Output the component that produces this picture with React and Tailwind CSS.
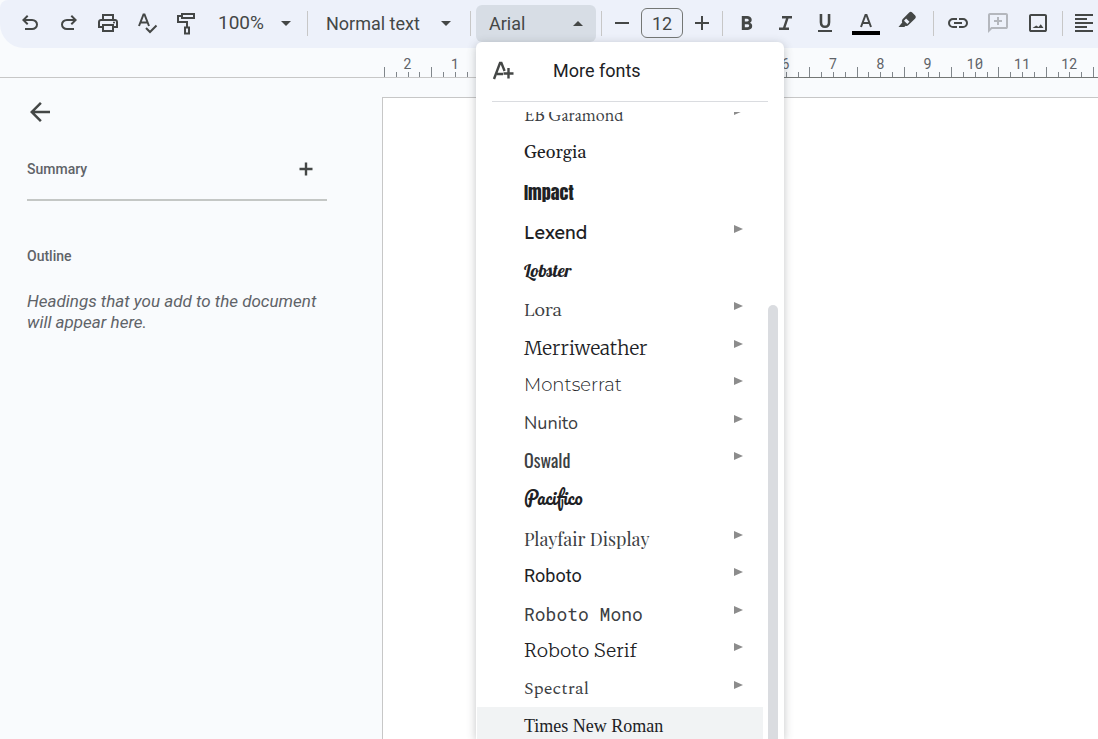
import clsx from 'clsx'

// Filled glyphs, all on the 960 grid
const ICONS = {
  undo: 'M280-200v-80h284q63 0 109.5-40T720-420q0-60-46.5-100T564-560H312l104 104-56 56-200-200 200-200 56 56-104 104h252q97 0 166.5 63T800-420q0 94-69.5 157T564-200H280Z',
  redo: 'M396-200q-97 0-166.5-63T160-420q0-94 69.5-157T396-640h252L544-744l56-56 200 200-200 200-56-56 104-104H396q-63 0-109.5 40T240-420q0 60 46.5 100T396-280h284v80H396Z',
  print: 'M640-640v-120H320v120h-80v-200h480v200h-80Zm80 180q17 0 28.5-11.5T760-500q0-17-11.5-28.5T720-540q-17 0-28.5 11.5T680-500q0 17 11.5 28.5T720-460Zm-80 260v-160H320v160h320Zm80 80H240v-160H80v-240q0-51 35-85.5t85-34.5h560q51 0 85 34.5t35 85.5v240H720v160Zm80-240v-160q0-17-11.5-28.5T760-560H200q-17 0-28.5 11.5T160-520v160h80v-80h480v80h80Z',
  back: 'm313-440 224 224-57 56-320-320 320-320 57 56-224 224h487v80H313Z',
  add: 'M440-440H200v-80h240v-240h80v240h240v80H520v240h-80v-240Z',
  remove: 'M200-440v-80h560v80H200Z',
  bold: 'M272-200v-560h221q65 0 120 40t55 111q0 51-23 78.5T602-491q25 11 55.5 41t30.5 90q0 89-65 124.5T501-200H272Zm121-112h104q48 0 58.5-24.5T566-372q0-11-10.5-35.5T494-432H393v120Zm0-228h93q33 0 48-17t15-38q0-24-17-39t-44-15h-95v109Z',
  italic: 'M200-200v-100h160l120-360H320v-100h400v100H580L460-300h140v100H200Z',
  underline: 'M200-120v-80h560v80H200Zm280-160q-101 0-157-63t-56-167v-330h103v336q0 56 28 91t82 35q54 0 82-35t28-91v-336h103v330q0 104-56 167t-157 63Z',
  link: 'M440-280H280q-83 0-141.5-58.5T80-480q0-83 58.5-141.5T280-680h160v80H280q-50 0-85 35t-35 85q0 50 35 85t85 35h160v80ZM320-440v-80h320v80H320Zm200 160v-80h160q50 0 85-35t35-85q0-50-35-85t-85-35H520v-80h160q83 0 141.5 58.5T880-480q0 83-58.5 141.5T680-280H520Z',
  comment: 'M440-400h80v-120h120v-80H520v-120h-80v120H320v80h120v120ZM80-80v-720q0-33 23.5-56.5T160-880h640q33 0 56.5 23.5T880-800v480q0 33-23.5 56.5T800-240H240L80-80Zm126-240h594v-480H160v525l46-45Z',
  image: 'M200-120q-33 0-56.5-23.5T120-200v-560q0-33 23.5-56.5T200-840h560q33 0 56.5 23.5T840-760v560q0 33-23.5 56.5T760-120H200Zm0-80h560v-560H200v560Zm60-80h440L590-430l-90 110-90-60-150 100Z',
  align: 'M120-120v-80h720v80H120Zm0-160v-80h480v80H120Zm0-160v-80h720v80H120Zm0-160v-80h480v80H120Zm0-160v-80h720v80H120Z',
}

const FONTS = [
  { name: 'EB Garamond', more: true, row: 'h-[38px]', face: "text-[18px] text-[#3c4043] font-['EB_Garamond','Liberation_Serif',serif]" },
  { name: 'Georgia', row: 'h-10', face: "text-[18px] font-['Gelasio','Georgia','Liberation_Serif',serif]" },
  { name: 'Impact', row: 'h-10', face: "text-[18px] font-['Anton','Impact','Oswald','Liberation_Sans_Narrow',sans-serif]" },
  { name: 'Lexend', more: true, row: 'h-[38px]', face: "text-[18px] font-['Lexend','Noto_Sans',sans-serif]" },
  { name: 'Lobster', row: 'h-[39px]', face: "text-[18px] font-['Lobster','Liberation_Serif',serif]" },
  { name: 'Lora', more: true, row: 'h-[38px]', face: "text-[18px] text-[#3c4043] font-['Lora','Liberation_Serif',serif]" },
  { name: 'Merriweather', more: true, row: 'h-[37px]', face: "text-[19px] font-light font-['Merriweather','DejaVu_Serif_Condensed','DejaVu_Serif',serif]" },
  { name: 'Montserrat', more: true, row: 'h-[38px]', face: "text-[18px] font-light font-['Montserrat','Inter',sans-serif]" },
  { name: 'Nunito', more: true, row: 'h-[37px]', face: "text-[18px] text-[#3c4043] font-['Nunito','Noto_Sans',sans-serif]" },
  { name: 'Oswald', more: true, row: 'h-[38px]', face: "text-[18px] text-[#3c4043] font-['Oswald','Liberation_Sans_Narrow','DejaVu_Sans_Condensed',sans-serif]" },
  { name: 'Pacifico', row: 'h-[41px]', face: "text-[18px] font-['Pacifico','Liberation_Serif',serif]" },
  { name: 'Playfair Display', more: true, row: 'h-[37px]', face: "text-[18px] text-[#3c4043] font-['Playfair_Display','Liberation_Serif',serif]" },
  { name: 'Roboto', more: true, row: 'h-[38px]', face: "text-[18px] font-['Roboto',sans-serif]" },
  { name: 'Roboto Mono', more: true, row: 'h-[37px]', face: "text-[18px] text-[#3c4043] font-['Roboto_Mono','Liberation_Mono',monospace]" },
  { name: 'Roboto Serif', more: true, row: 'h-[38px]', face: "text-[19px] font-light font-['Roboto_Serif','DejaVu_Serif',serif]" },
  { name: 'Spectral', more: true, row: 'h-[37px]', face: "text-[18px] text-[#3c4043] font-['Spectral','Liberation_Serif',serif]" },
  { name: 'Times New Roman', active: true, row: 'h-10', face: "text-[18px] font-['Times_New_Roman','Liberation_Serif',serif]" },
]

// The cells under the open menu carry no number
const RULER = ['2', '1', '', '', '', '', '', '', '6', '7', '8', '9', '10', '11', '12']

function Glyph({ name, className = 'size-6' }) {
  return (
    <svg viewBox="0 -960 960 960" fill="currentColor" className={clsx('shrink-0', className)} aria-hidden="true">
      <path d={ICONS[name]} />
    </svg>
  )
}

function Stroke({ children }) {
  return (
    <svg viewBox="0 0 24 24" fill="none" stroke="currentColor" strokeWidth="2" className="size-6 shrink-0" aria-hidden="true">
      {children}
    </svg>
  )
}

function ToolButton({ label, className, children }) {
  return (
    <button type="button" aria-label={label} className={clsx('flex size-6 shrink-0 items-center justify-center', className)}>
      {children}
    </button>
  )
}

function Caret({ up }) {
  return (
    <svg viewBox="0 0 10 5" fill="currentColor" className="pointer-events-none h-[5px] w-[10px] shrink-0" aria-hidden="true">
      <path d={up ? 'M0 5 5 0l5 5Z' : 'M0 0h10L5 5Z'} />
    </svg>
  )
}

function Divider() {
  return <div className="h-[25px] w-px shrink-0 bg-[#c7c7c7]" />
}

// Native select with its own caret, sized by the wrapper
function Picker({ label, value, className }) {
  return (
    <label className={clsx('flex shrink-0 items-center', className)}>
      <select aria-label={label} defaultValue={value} className="min-w-0 flex-1 appearance-none bg-transparent outline-none">
        <option>{value}</option>
      </select>
      <Caret />
    </label>
  )
}

function FontMenu() {
  return (
    <div
      role="menu"
      className="absolute top-full left-0 z-10 flex h-[calc(100vh-42px)] w-[308px] flex-col rounded-t-md bg-white text-[#202124] shadow-[0_2px_10px_rgba(60,64,67,0.3)]"
    >
      <button type="button" role="menuitem" className="mx-4 flex h-[60px] shrink-0 items-center gap-[37px] border-b border-[#dadce0] pb-0.5 text-left text-[18px]">
        <svg viewBox="0 0 24 24" fill="none" stroke="#444746" strokeWidth="2.4" className="size-6 shrink-0" aria-hidden="true">
          <path d="M2 20 8 4h1.4l3.2 8M5 15h6M16.5 9v10.5M11.500 14.500h10" />
        </svg>
        More fonts
      </button>
      <div className="mt-[10px] flex min-h-0 flex-1 overflow-hidden">
        <div className="-mt-4 ml-px flex-1">
          {FONTS.map((font) => (
            <button
              key={font.name}
              type="button"
              role="menuitem"
              className={clsx('flex w-full items-start justify-between pr-5 pl-[47px] text-left', font.row, font.active && 'bg-[#f1f3f4]')}
            >
              <span className={clsx('leading-[38px] whitespace-nowrap', font.face)}>{font.name}</span>
              {font.more && (
                <svg viewBox="0 0 9 8" fill="#8c8c8c" className="mt-[11px] h-2 w-[9px]" aria-hidden="true">
                  <path d="M0 0 9 4 0 8Z" />
                </svg>
              )}
            </button>
          ))}
        </div>
        <div className="mr-[6px] ml-[5px] flex w-[10px] flex-col pt-[193px]">
          <div className="flex-1 rounded-t-full bg-[#dadce0]" />
        </div>
      </div>
    </div>
  )
}

function Toolbar() {
  return (
    <div className="flex h-12 items-center rounded-tl-lg rounded-bl-3xl bg-[#edf1fa] pb-0.5 pl-[18px] text-[18px] text-[#444746]">
      <div className="flex gap-[15px]">
        <ToolButton label="Undo"><Glyph name="undo" /></ToolButton>
        <ToolButton label="Redo"><Glyph name="redo" /></ToolButton>
        <ToolButton label="Print"><Glyph name="print" /></ToolButton>
        <ToolButton label="Spelling">
          <Stroke>
            <path d="M4 15 8.5 3.5h1L14 15M5.5 11.5h7M11 17l4 4 6.5-6.500" />
          </Stroke>
        </ToolButton>
        <ToolButton label="Paint format">
          <Stroke>
            <path d="M8 3h12v4H8ZM8 5H4v6h9v5M11 16.5h4v6h-4Z" />
          </Stroke>
        </ToolButton>
      </div>
      <Picker label="Zoom" value="100%" className="mr-4 ml-5 w-[73px] text-[19px]" />
      <Divider />
      <Picker label="Styles" value="Normal text" className="mr-[19px] ml-[18px] w-[125px]" />
      <Divider />
      <div className="relative mx-[5px] mt-[5px] flex h-[37px] w-[120px] shrink-0 self-start">
        <button
          type="button"
          aria-haspopup="menu"
          aria-expanded="true"
          className="flex flex-1 items-center justify-between rounded-md bg-[#d7dde5] px-[13px]"
        >
          Arial
          <Caret up />
        </button>
        <FontMenu />
      </div>
      <Divider />
      <ToolButton label="Decrease font size" className="ml-2"><Glyph name="remove" /></ToolButton>
      <input aria-label="Font size" defaultValue="12" className="mx-[7px] h-[30px] w-[42px] shrink-0 rounded-md border border-[#747775] bg-transparent text-center text-[18px] outline-none" />
      <ToolButton label="Increase font size" className="mr-2"><Glyph name="add" /></ToolButton>
      <Divider />
      <div className="mr-[14px] ml-3 flex items-center gap-[15px]">
        <ToolButton label="Bold"><Glyph name="bold" /></ToolButton>
        <ToolButton label="Italic"><Glyph name="italic" /></ToolButton>
        <ToolButton label="Underline"><Glyph name="underline" /></ToolButton>
        <button type="button" aria-label="Text color" className="flex h-6 w-7 shrink-0 flex-col items-center">
          <svg viewBox="0 0 28 24" className="h-6 w-7" aria-hidden="true">
            <path d="m9 16 4.5-12h1L19 16M10.5 12h7" fill="none" stroke="currentColor" strokeWidth="2" />
            <path d="M0 20h28v5H0Z" fill="#000" />
          </svg>
        </button>
        <ToolButton label="Highlight color">
          <svg viewBox="0 0 24 24" className="size-6" aria-hidden="true">
            <path fill="currentColor" fillRule="evenodd" d="m7.5 8.2 6.7-6.7q1.500-1.300 3 0l3 3q1.400 1.500 0 3l-7 6.800q-1.300 1.200-2.600.4L9.300 16H3.500l3.700-4.400q-.9-1.800.3-3.400Zm1.500 1.500 3.300 3.300 2.200-2.200-3.400-3.400Z" />
          </svg>
        </ToolButton>
      </div>
      <Divider />
      <div className="mx-3 flex items-center gap-4">
        <ToolButton label="Insert link"><Glyph name="link" /></ToolButton>
        <ToolButton label="Add comment" className="text-[#b4b7bd]"><Glyph name="comment" /></ToolButton>
        <ToolButton label="Insert image"><Glyph name="image" /></ToolButton>
      </div>
      <Divider />
      <ToolButton label="Align" className="ml-[9px]"><Glyph name="align" /></ToolButton>
    </div>
  )
}

function Ruler() {
  return (
    <div className="flex h-[30px] shrink-0">
      <div className="w-96 shrink-0 border-b border-[#c7c7c7]" />
      <div className="grid w-[709px] shrink-0 grid-cols-15">
        {RULER.map((label, i) => (
          <div
            key={i}
            className={clsx('flex flex-col justify-end border-b', i < 2 ? 'border-[#c7c7c7]' : 'border-[#747775]')}
          >
            <div className="text-center font-['Roboto_Mono','Liberation_Mono',monospace] text-[14px] leading-4 text-[#5f6368]">{label}</div>
            <div className="-mt-[5px] flex h-[10px] shrink-0 items-end">
              <i className="h-[10px] flex-1 border-l border-[#80868b]" />
              <i className="h-[5px] flex-1 border-l border-[#80868b]" />
              <i className="h-[5px] flex-1 border-l border-[#80868b]" />
              <i className="h-[5px] flex-1 border-l border-[#80868b]" />
            </div>
          </div>
        ))}
      </div>
      <div className="flex flex-1 items-end border-b border-[#747775]">
        <i className="h-[10px] border-l border-[#80868b]" />
      </div>
    </div>
  )
}

function Sidebar() {
  return (
    <aside className="w-[382px] shrink-0 pt-[19px] pr-[55px] pl-[25px] text-[#5f6368]">
      <button type="button" aria-label="Close outline" className="block text-[#444746]">
        <Glyph name="back" className="size-[30px]" />
      </button>
      <div className="mt-[30px] ml-0.5 flex h-11 items-start justify-between border-b-2 border-[#c4c7c5] pr-[9px]">
        <h2 className="text-[14px] leading-6 font-medium">Summary</h2>
        <button type="button" aria-label="Add summary" className="flex size-6 items-center justify-center text-[#444746]">
          <svg viewBox="0 0 14 14" className="size-[14px]" stroke="currentColor" strokeWidth="2.4" aria-hidden="true">
            <path d="M7 .5v13M.5 7h13" />
          </svg>
        </button>
      </div>
      <h2 className="mt-[43px] ml-0.5 text-[14px] leading-6 font-medium">Outline</h2>
      <p className="mt-[23px] ml-0.5 text-[17px] leading-[21px] italic">Headings that you add to the document will appear here.</p>
    </aside>
  )
}

export default function App() {
  return (
    <div className="flex h-screen flex-col overflow-hidden bg-[#f9fbfd] font-['Roboto',sans-serif]">
      <Toolbar />
      <Ruler />
      <div className="flex min-h-0 flex-1">
        <Sidebar />
        <main className="mt-[19px] flex-1 border-t border-l border-[#c7c7c7] bg-white" />
      </div>
    </div>
  )
}
